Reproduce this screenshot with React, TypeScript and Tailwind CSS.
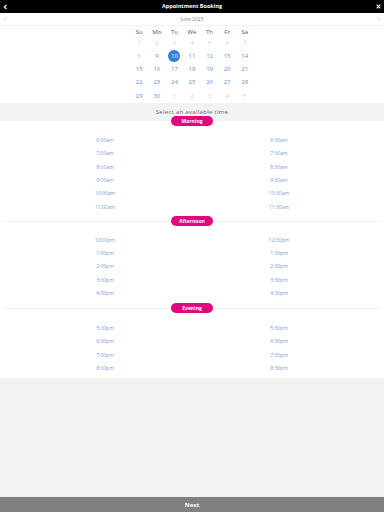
import React from "react";

const weekdays = ["Su", "Mo", "Tu", "We", "Th", "Fr", "Sa"];

type Day = { n: number; muted?: boolean; sel?: boolean; past?: boolean };
const weeks: Day[][] = [
  [1, 2, 3, 4, 5, 6, 7].map((n) => ({ n, past: true })),
  [8, 9, 10, 11, 12, 13, 14].map((n) => ({ n, past: n === 8, sel: n === 10 })),
  [15, 16, 17, 18, 19, 20, 21].map((n) => ({ n })),
  [22, 23, 24, 25, 26, 27, 28].map((n) => ({ n })),
  [
    { n: 29 },
    { n: 30 },
    { n: 1, muted: true },
    { n: 2, muted: true },
    { n: 3, muted: true },
    { n: 4, muted: true },
    { n: 5, muted: true },
  ],
];

const morning = [
  ["6:00am", "6:30am"],
  ["7:00am", "7:30am"],
  ["8:00am", "8:30am"],
  ["9:00am", "9:30am"],
  ["10:00am", "10:30am"],
  ["11:00am", "11:30am"],
];
const afternoon = [
  ["12:00pm", "12:30pm"],
  ["1:00pm", "1:30pm"],
  ["2:00pm", "2:30pm"],
  ["3:00pm", "3:30pm"],
  ["4:00pm", "4:30pm"],
];
const evening = [
  ["5:00pm", "5:30pm"],
  ["6:00pm", "6:30pm"],
  ["7:00pm", "7:30pm"],
  ["8:00pm", "8:30pm"],
];

function Pill({ label }: { label: string }) {
  return (
    <div className="relative flex h-[10px] w-[42px] items-center justify-center rounded-full bg-[#e0067f] text-[5px] font-bold leading-none text-white">
      {label}
    </div>
  );
}

function Divider({ label }: { label: string }) {
  return (
    <div className="flex h-[10px] items-center px-[3px]">
      <div className="h-px flex-1 bg-[#efefef]" />
      <Pill label={label} />
      <div className="h-px flex-1 bg-[#efefef]" />
    </div>
  );
}

function Times({ rows, className }: { rows: string[][]; className: string }) {
  return (
    <div className={"grid grid-cols-2 px-[18px] " + className}>
      {rows.map(([a, b]) => (
        <React.Fragment key={a}>
          <div className="flex h-[13.4px] items-center justify-center text-[5px] leading-none text-[#7b98dc]">
            {a}
          </div>
          <div className="flex h-[13.4px] items-center justify-center text-[5px] leading-none text-[#7b98dc]">
            {b}
          </div>
        </React.Fragment>
      ))}
    </div>
  );
}

export default function App() {
  return (
    <div
      className="flex h-[512px] w-[384px] flex-col bg-[#f2f2f2]"
      style={{ fontFamily: '"Open Sans", Inter, sans-serif' }}
    >
      {/* Header */}
      <div className="flex h-[13px] items-center justify-between bg-black px-[3px]">
        <svg width="5" height="6" viewBox="0 0 5 6">
          <path d="M3.5 0.8 L1.3 3 L3.5 5.2" stroke="white" strokeWidth="1.2" fill="none" />
        </svg>
        <div className="text-[5.5px] font-bold leading-none text-white">Appointment Booking</div>
        <svg width="5" height="5" viewBox="0 0 5 5">
          <path d="M0.7 0.7 L4.3 4.3 M4.3 0.7 L0.7 4.3" stroke="white" strokeWidth="1.1" />
        </svg>
      </div>

      {/* Calendar */}
      <div className="bg-white">
        <div className="flex h-[13px] items-center justify-between border-b border-[#f2f2f2] px-[3px]">
          <svg width="5" height="6" viewBox="0 0 5 6">
            <path d="M3.5 0.8 L1.5 3 L3.5 5.2" stroke="#c8c8c8" strokeWidth="0.7" fill="none" />
          </svg>
          <div className="text-[5px] leading-none text-[#888]">June 2025</div>
          <svg width="5" height="6" viewBox="0 0 5 6">
            <path d="M1.5 0.8 L3.5 3 L1.5 5.2" stroke="#c8c8c8" strokeWidth="0.7" fill="none" />
          </svg>
        </div>
        <div className="mx-auto w-[123px] pb-[1px]">
          <div className="grid h-[10px] grid-cols-7 items-center pt-[2px]">
            {weekdays.map((d) => (
              <div key={d} className="text-center text-[6px] leading-none text-[#555]">
                {d}
              </div>
            ))}
          </div>
          {weeks.map((w, i) => (
            <div key={i} className="grid h-[13.25px] grid-cols-7 items-center">
              {w.map((d, j) => (
                <div key={j} className="flex items-center justify-center">
                  {d.sel ? (
                    <div className="flex h-[12px] w-[12px] items-center justify-center rounded-full bg-[#2f80e0] text-[6px] leading-none text-white">
                      {d.n}
                    </div>
                  ) : (
                    <div
                      className={
                        "text-[6px] leading-none " +
                        (d.past || d.muted ? "text-[#cfcfcf]" : "text-[#5b8ed8]")
                      }
                    >
                      {d.n}
                    </div>
                  )}
                </div>
              ))}
            </div>
          ))}
        </div>
      </div>

      {/* Select an available time */}
      <div className="flex h-[18px] items-center justify-center text-[6px] leading-none tracking-[0.3px] text-[#666]">
        Select an available time
      </div>

      {/* Slots */}
      <div className="bg-white">
        <div className="-mt-[5px] flex justify-center">
          <Pill label="Morning" />
        </div>
        <Times rows={morning} className="pt-[7.3px] pb-[7.3px]" />
        <div className="-mt-[5px]">
          <Divider label="Afternoon" />
        </div>
        <Times rows={afternoon} className="pt-[7.3px] pb-[2.7px]" />
        <Divider label="Evening" />
        <Times rows={evening} className="pt-[8.5px] pb-[2.5px]" />
      </div>

      <div className="flex-1" />

      {/* Next */}
      <div className="flex h-[15px] items-center justify-center bg-[#808080] text-[6px] font-bold leading-none text-white">
        Next
      </div>
    </div>
  );
}
